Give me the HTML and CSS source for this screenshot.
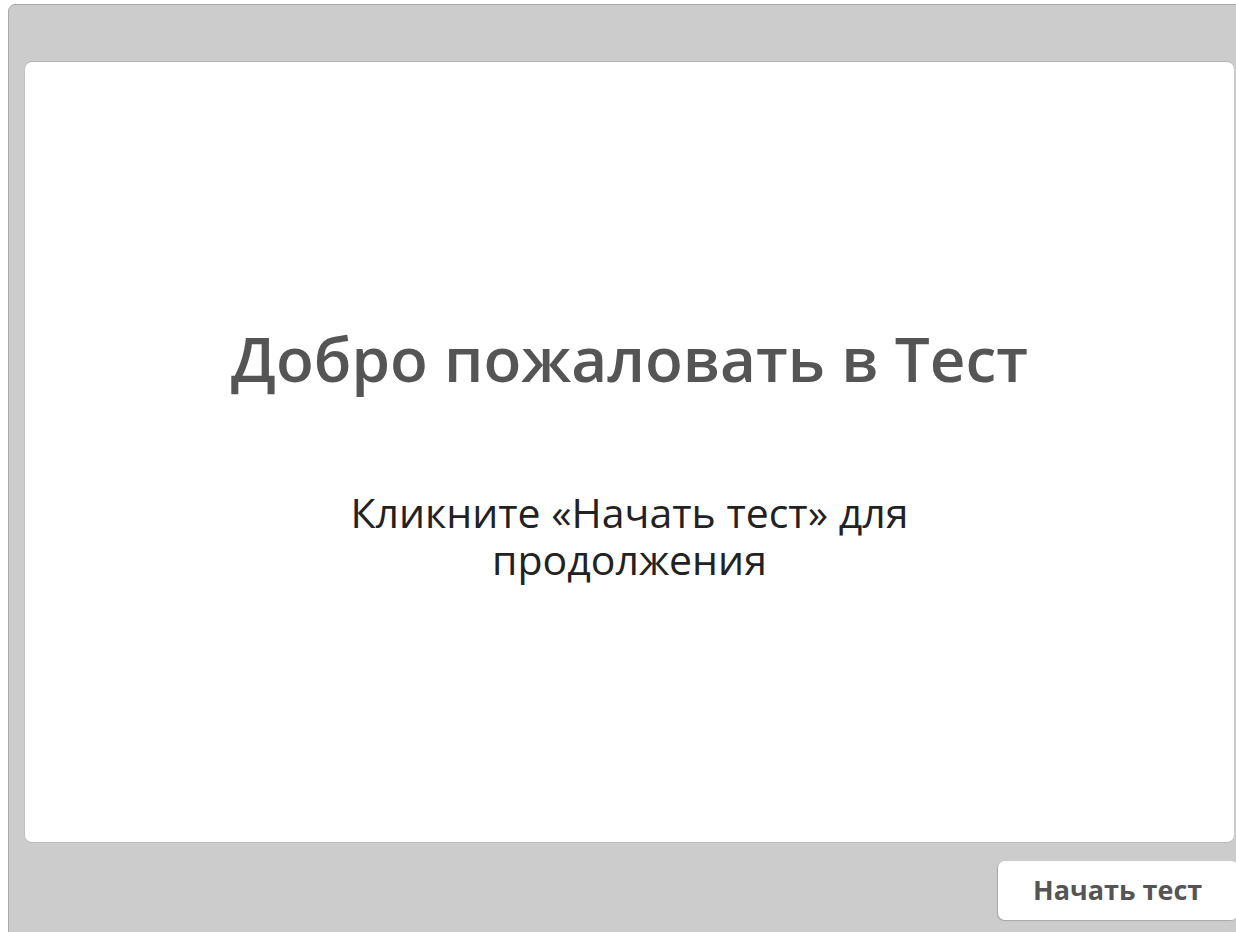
FILE: index.html
```html
<!DOCTYPE html>
<html lang="ru">
<head>
<meta charset="utf-8">
<title>Тест</title>
<link rel="stylesheet" href="styles.css">
</head>
<body>
  <div class="player">
    <main class="slide">
      <div class="slide-content">
        <h1 class="slide-title">Добро пожаловать в Тест</h1>
        <p class="slide-text">Кликните «Начать тест» для продолжения</p>
      </div>
    </main>
    <div class="player-footer">
      <button class="start-button" type="button">Начать тест</button>
    </div>
  </div>
</body>
</html>
```

FILE: styles.css
```css
html, body {
  margin: 0;
  padding: 0;
  background: #ffffff;
  overflow: hidden;
  width: 1236px;
  height: 932px;
}

body {
  font-family: "Open Sans", "Noto Sans", sans-serif;
}

.player {
  box-sizing: border-box;
  margin: 4px 0 0 8px;
  width: 1250px;
  height: 940px;
  background: #cccccc;
  border: 1px solid #a9a9a9;
  border-radius: 7px;
  padding: 57px 0 0 16px;
  display: flex;
  flex-direction: column;
}

.slide {
  box-sizing: border-box;
  width: 1209px;
  height: 780px;
  background: #ffffff;
  border-radius: 7px;
  box-shadow: 0 -1px 0 #b5b5b5, -1px 0 0 #c2c2c2, 0 1px 0 #b9b9b9;
  display: flex;
  align-items: center;
  justify-content: center;
}

.slide-content {
  display: flex;
  flex-direction: column;
  align-items: center;
  text-align: center;
  margin-top: -1px;
}

.slide-title {
  margin: 0;
  font-size: 62px;
  font-weight: 600;
  color: #555555;
  line-height: 74px;
}

.slide-text {
  margin: 94px 0 0;
  max-width: 640px;
  font-size: 41px;
  font-weight: 400;
  color: #222222;
  line-height: 47px;
}

.player-footer {
  width: 1213px;
  margin-top: 19px;
  display: flex;
  justify-content: flex-end;
}

.start-button {
  box-sizing: border-box;
  width: 240px;
  height: 59px;
  background: #ffffff;
  border: none;
  border-radius: 7px;
  box-shadow: -1px 1px 1px rgba(0, 0, 0, 0.18);
  font-family: "Open Sans", "Noto Sans", sans-serif;
  font-size: 27px;
  font-weight: 700;
  color: #555555;
  text-align: left;
  padding: 0 0 3px 35px;
}
```
